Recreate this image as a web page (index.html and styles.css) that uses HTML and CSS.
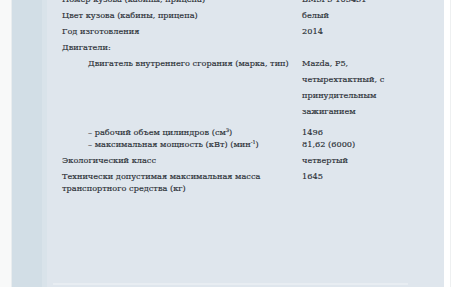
FILE: index.html
```html
<!DOCTYPE html>
<html lang="ru">
<head>
<meta charset="utf-8">
<link rel="stylesheet" href="styles.css">
</head>
<body>
<div class="page">
  <div class="gutter"></div>
  <div class="rail"></div>
  <div class="rail-edge"></div>
  <main class="doc">
    <div class="spec">
      <div class="row"><div class="lbl">Номер кузова (кабины, прицепа)</div><div class="val">BM3F3-105431</div></div>
      <div class="row"><div class="lbl">Цвет кузова (кабины, прицепа)</div><div class="val">белый</div></div>
      <div class="row"><div class="lbl">Год изготовления</div><div class="val">2014</div></div>
      <div class="row"><div class="lbl">Двигатели:</div><div class="val"></div></div>
      <div class="row"><div class="lbl sub">Двигатель внутреннего сгорания (марка, тип)</div><div class="val tall">Mazda, P5,<br>четырехтактный, с<br>принудительным<br>зажиганием</div></div>
      <div class="row gap"><div class="lbl sub">– рабочий объем цилиндров (см<sup>3</sup>)<br>– максимальная мощность (кВт) (мин<sup>-1</sup>)</div><div class="val">1496<br>81,62 (6000)</div></div>
      <div class="row"><div class="lbl">Экологический класс</div><div class="val">четвертый</div></div>
      <div class="row"><div class="lbl">Технически допустимая максимальная масса<br>транспортного средства (кг)</div><div class="val">1645</div></div>
    </div>
    <div class="rule"></div>
  </main>
  <div class="aside"></div>
</div>
</body>
</html>
```

FILE: styles.css
```css
html, body {
  margin: 0;
  padding: 0;
  background: #ffffff;
}
.page {
  display: flex;
  height: 287px;
  overflow: hidden;
  font-family: "DejaVu Serif", "Liberation Serif", serif;
  font-size: 8.2px;
  color: #2b3036;
  -webkit-text-stroke: 0.15px #2b3036;
}
.gutter {
  flex: 0 0 11px;
  background: #f8f9f9;
  border-right: 1px solid #e9edef;
}
.rail {
  flex: 0 0 30px;
  background: #d2dee6;
}
.rail-edge {
  flex: 0 0 5px;
  background: #d9e3ea;
}
.doc {
  flex: 0 0 397px;
  background: #dfe6ed;
  display: flex;
  flex-direction: column;
  min-width: 0;
}
.aside {
  flex: 0 0 6px;
  background: #ffffff;
  border-right: 1px solid #eef0f1;
}
.spec {
  margin-top: -9px;
  padding-left: 15px;
  display: flex;
  flex-direction: column;
}
.row {
  display: grid;
  grid-template-columns: 240px 130px;
}
.lbl, .val {
  padding: 2px 0;
  line-height: 12px;
  white-space: nowrap;
}
.lbl.sub {
  padding-left: 26px;
}
.val.tall {
  line-height: 16px;
  padding-top: 0;
}
.gap .lbl, .gap .val {
  padding-top: 5px;
}
sup {
  font-size: 5px;
  line-height: 0;
  vertical-align: 3px;
}
.rule {
  margin-top: auto;
  margin-left: 6px;
  width: 355px;
  height: 2px;
  background: #e8edf2;
  margin-bottom: 2px;
}
```
